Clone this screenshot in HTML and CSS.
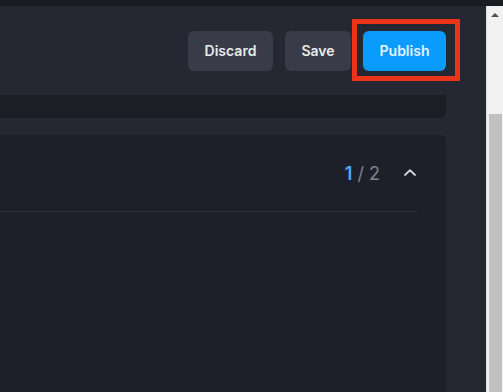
FILE: index.html
```html
<!DOCTYPE html>
<html lang="en">

<head>
    <meta charset="UTF-8">
    <meta name="viewport" content="width=device-width, initial-scale=1.0">
    <title>Editor</title>
    <link rel="stylesheet" href="styles.css">
</head>

<body>
    <div class="topo"></div>

    <div class="janela">
        <div class="principal">
            <header class="cabecalho">
                <button class="botao cinza">Discard</button>
                <button class="botao cinza">Save</button>
                <div class="destaque">
                    <button class="botao azul">Publish</button>
                </div>
            </header>

            <div class="barra"></div>

            <section class="painel">
                <div class="linha">
                    <span class="contagem"><span class="atual">1</span> / 2</span>
                    <svg class="seta" width="12" height="7" viewBox="0 0 12 7">
                        <path d="M1 6 L6 1.2 L11 6" fill="none" stroke="#d4d6db" stroke-width="1.8"
                            stroke-linecap="round" stroke-linejoin="round" />
                    </svg>
                </div>
            </section>
        </div>

        <div class="rolagem">
            <div class="trilho">
                <span class="triangulo"></span>
            </div>
            <div class="polegar"></div>
        </div>
    </div>
</body>

</html>
```

FILE: styles.css
```css
* {
    box-sizing: border-box;
}

html,
body {
    height: 100%;
}

body {
    margin: 0;
    background-color: #252733;
    font-family: Inter, "Noto Sans", sans-serif;
    overflow: hidden;
    display: flex;
    flex-direction: column;
}

.topo {
    height: 6px;
    background-color: #1a1c22;
    flex-shrink: 0;
}

.janela {
    flex: 1;
    display: flex;
}

.principal {
    flex: 1;
    display: flex;
    flex-direction: column;
}

.cabecalho {
    height: 89px;
    display: flex;
    align-items: center;
    justify-content: flex-end;
    gap: 12px;
    padding-right: 40px;
}

.botao {
    height: 40px;
    border: none;
    border-radius: 6px;
    font-family: inherit;
    font-size: 14px;
    font-weight: 600;
    color: #e9eaec;
    cursor: pointer;
}

.cinza {
    background-color: #393c48;
}

.cinza:first-child {
    width: 85px;
}

.cinza:nth-child(2) {
    width: 66px;
}

.azul {
    width: 83px;
    background-color: #0a9bff;
    color: #e6f3ff;
}

.destaque {
    position: relative;
}

.destaque::after {
    content: "";
    position: absolute;
    left: -11px;
    right: -14px;
    top: -12px;
    bottom: -10px;
    border: 5px solid #ec3419;
    pointer-events: none;
}

.barra {
    width: 446px;
    height: 23px;
    background-color: #1c1e25;
    border-bottom-right-radius: 6px;
}

.painel {
    flex: 1;
    width: 446px;
    margin-top: 17px;
    background-color: #1e2029;
    border-top-right-radius: 6px;
    padding-right: 28px;
}

.linha {
    height: 77px;
    display: flex;
    align-items: center;
    justify-content: flex-end;
    gap: 24px;
    padding-right: 2px;
    border-bottom: 1px solid #2b2e38;
}

.contagem {
    font-size: 18px;
    color: #80838d;
}

.atual {
    color: #4aaeff;
    font-weight: 600;
}

.seta {
    margin-top: -2px;
}

.rolagem {
    width: 17px;
    display: flex;
    flex-direction: column;
    background-color: #f1f1f1;
    border-left: 1px solid #dcdcdc;
}

.trilho {
    height: 108px;
    display: flex;
    justify-content: center;
    padding-top: 7px;
}

.triangulo {
    width: 0;
    height: 0;
    border-left: 4px solid transparent;
    border-right: 4px solid transparent;
    border-bottom: 4px solid #505050;
}

.polegar {
    flex: 1;
    margin: 0 1px 0 2px;
    background-color: #c1c1c1;
}
```
